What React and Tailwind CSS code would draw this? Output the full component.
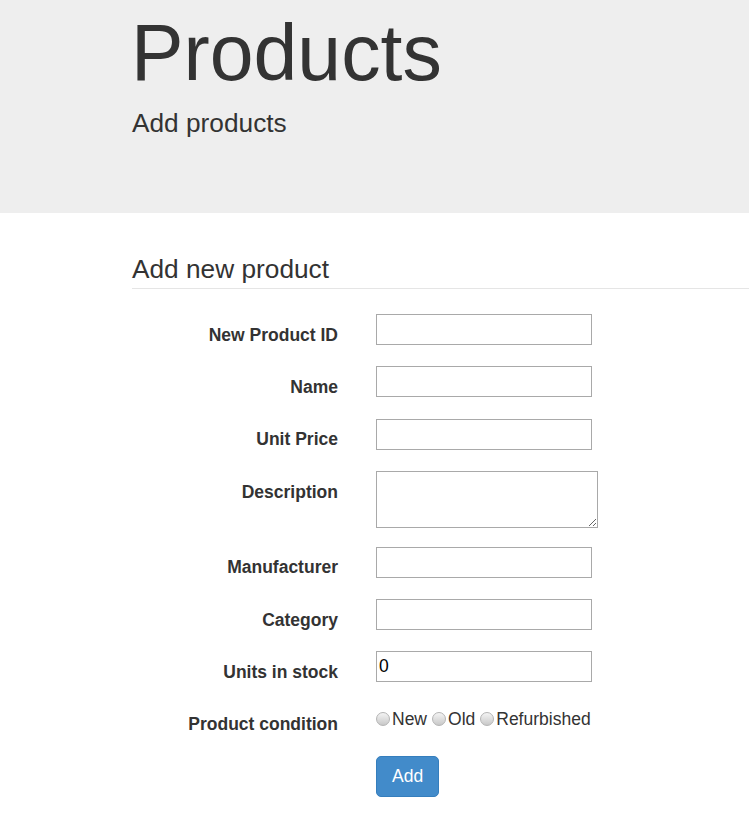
export default function App() {
  const fields = [
    { label: "New Product ID", value: "" },
    { label: "Name", value: "" },
    { label: "Unit Price", value: "" },
    { label: "Description", textarea: true },
    { label: "Manufacturer", value: "" },
    { label: "Category", value: "" },
    { label: "Units in stock", value: "0" },
  ];

  const Radio = ({ text }) => (
    <label className="flex items-start mr-[5px]">
      <span className="mt-[5px] mr-[2px] w-[14px] h-[14px] rounded-full border border-[#b4b4b4] bg-linear-to-b from-[#f4f4f4] to-[#c9c9c9] shrink-0" />
      <span className="leading-[25px] text-[#333]">{text}</span>
    </label>
  );

  return (
    <div className="min-h-[824px] bg-white text-[#333] text-[17.5px] font-['Liberation_Sans',Arial,sans-serif]">
      {/* Jumbotron */}
      <div className="h-[213px] bg-[#eeeeee] pl-[132px] pt-[10px]">
        <h1 className="text-[78.75px] leading-[86px] ml-[-1px]">Products</h1>
        <p className="mt-[12px] text-[26.25px] leading-[30px]">Add products</p>
      </div>

      <section className="pl-[132px] pt-[41px]">
        <div className="border-b border-[#e5e5e5] pb-[4px] text-[26.25px] leading-[30px]">
          Add new product
        </div>

        <form className="pt-[25px]" onSubmit={(e) => e.preventDefault()}>
          {fields.map((f) => (
            <div key={f.label} className="flex mb-[18.6px]">
              <div className="w-[206px] text-right font-bold pt-[8.75px] leading-[25px] shrink-0">
                {f.label}
              </div>
              <div className="pl-[38px]">
                {f.textarea ? (
                  <textarea className="block w-[222px] h-[57px] border border-[#a9a9a9] bg-white" />
                ) : (
                  <input
                    type="text"
                    defaultValue={f.value}
                    className="block w-[216px] h-[31px] border border-[#a9a9a9] bg-white px-[2px] text-black text-[17.5px] outline-none"
                  />
                )}
              </div>
            </div>
          ))}

          <div className="flex mb-[18.75px]">
            <div className="w-[206px] text-right font-bold pt-[8.75px] leading-[25px] shrink-0">
              Product condition
            </div>
            <div className="pl-[38px] flex pt-[3px]">
              <Radio text="New" />
              <Radio text="Old" />
              <Radio text="Refurbished" />
            </div>
          </div>

          <div className="flex">
            <div className="w-[206px] shrink-0" />
            <div className="pl-[38px]">
              <button
                type="submit"
                className="h-[41px] px-[15px] bg-[#428bca] border border-[#357ebd] rounded-[5px] text-white leading-[25px]"
              >
                Add
              </button>
            </div>
          </div>
        </form>
      </section>
    </div>
  );
}
